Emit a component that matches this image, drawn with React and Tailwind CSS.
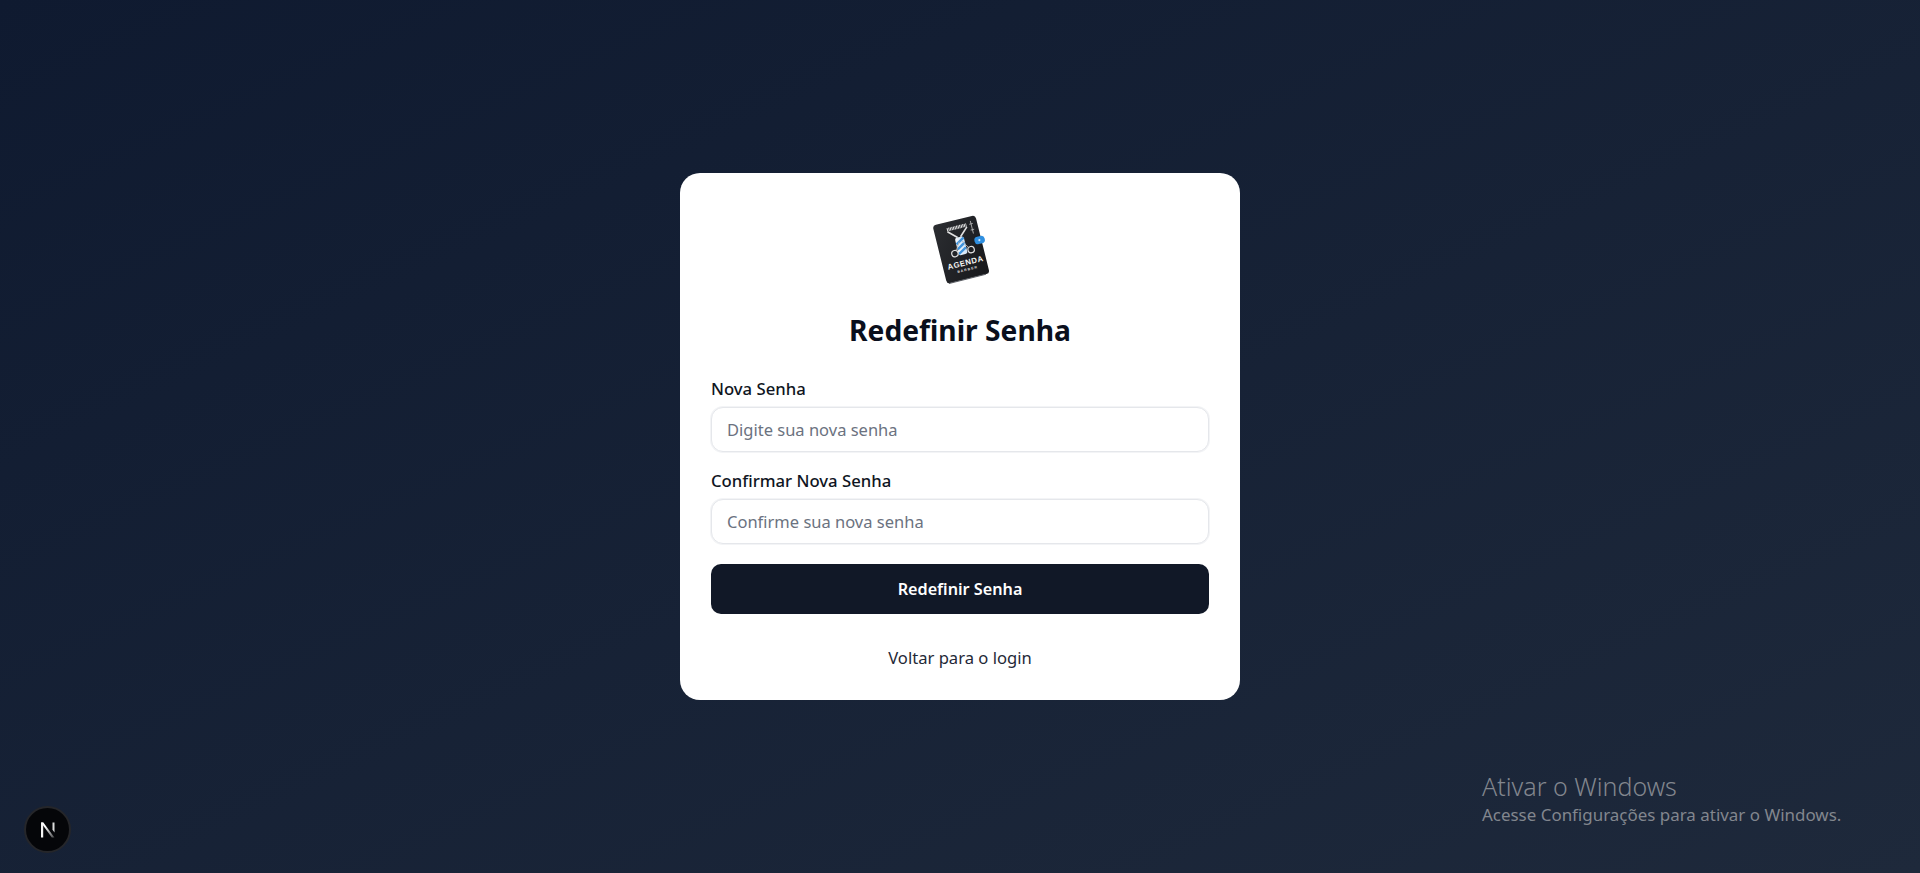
import React from "react";

const sans = "font-['Noto_Sans','Open_Sans',sans-serif]";

function Logo() {
  return (
    <svg width="72" height="72" viewBox="0 0 72 72" className="block">
      <defs>
        <linearGradient id="cover" x1="0" y1="0" x2="1" y2="1">
          <stop offset="0" stopColor="#2b2d31" />
          <stop offset="1" stopColor="#17181b" />
        </linearGradient>
        <linearGradient id="pole" x1="0" y1="0" x2="1" y2="0">
          <stop offset="0" stopColor="#f2f7fc" />
          <stop offset="1" stopColor="#cfe3f5" />
        </linearGradient>
      </defs>
      <g transform="rotate(-14 37 36)">
        <rect x="15" y="6.5" width="44" height="60" rx="3.5" fill="url(#cover)" />
        <path d="M17 66.5h38" stroke="#5b5e64" strokeWidth="1" />
        <path d="M28 14h20" stroke="#e6e6e6" strokeWidth="3.4" strokeDasharray="1 0.6" />
        <path d="M28 16l8.5 8M48 16l-8.5 8" stroke="#e2e2e2" strokeWidth="1.6" fill="none" />
        <rect x="33.5" y="24" width="9" height="18" rx="2.5" fill="url(#pole)" />
        <path d="M33.8 30.5l8.4-5M33.8 35.5l8.4-5M33.8 40.5l8.4-5" stroke="#3f93dc" strokeWidth="2.4" />
        <circle cx="30" cy="39" r="3.2" fill="none" stroke="#e0e0e0" strokeWidth="1.2" />
        <circle cx="46.7" cy="39" r="3.2" fill="none" stroke="#e0e0e0" strokeWidth="1.2" />
        <path d="M32 36.5l5-8M44.8 36.5l-5-8M52.8 11v13M51 14h3.6M51 20h3.6" stroke="#b8b8b8" strokeWidth="0.8" fill="none" />
        <text x="38" y="53" textAnchor="middle" fontSize="7.8" fontWeight="700" fill="#f4f4f4" fontFamily="'Liberation Sans', sans-serif" letterSpacing="0.5">AGENDA</text>
        <text x="38.5" y="58.5" textAnchor="middle" fontSize="3.4" fontWeight="700" fill="#e6e6e6" fontFamily="'Liberation Sans', sans-serif" letterSpacing="1.1">BARBER</text>
        <rect x="52" y="28" width="10.5" height="7.5" rx="3.5" fill="#2f8fe0" />
        <circle cx="57" cy="31.8" r="1.1" fill="#cfe6fa" />
      </g>
    </svg>
  );
}

const inputClass =
  "block w-full h-[45px] px-[15px] text-[16.5px] text-gray-900 placeholder:text-[#6b7280] border border-[#e5e7eb] shadow-[0_0_0_1px_#f3f4f6] rounded-[12px] bg-white outline-none";

export default function App() {
  return (
    <div className={`relative min-h-screen flex items-center justify-center overflow-hidden bg-gradient-to-br from-[#0f1a30] to-[#1e293b] ${sans}`}>
      <main className="w-[560px] bg-white rounded-[20px] px-[31px] pt-[37px] pb-[26px]">
        <div className="flex justify-center mb-[22px] h-[78px] items-center">
          <Logo />
        </div>
        <h1 className="text-[28.2px] leading-[40px] font-bold text-center text-[#0a0f1c] mb-[27px]">Redefinir Senha</h1>
        <form>
          <div className="mb-[17px]">
            <label className="block text-[16.7px] leading-[24px] font-medium text-[#0f1522] mb-[6px]">Nova Senha</label>
            <input type="password" placeholder="Digite sua nova senha" className={inputClass} />
          </div>
          <div className="mb-[20px]">
            <label className="block text-[16.7px] leading-[24px] font-medium text-[#0f1522] mb-[6px]">Confirmar Nova Senha</label>
            <input type="password" placeholder="Confirme sua nova senha" className={inputClass} />
          </div>
          <button type="button" className="block w-full h-[50px] pt-[1px] rounded-[10px] bg-[#111827] text-white text-[16.2px] font-semibold">
            Redefinir Senha
          </button>
        </form>
        <div className="mt-[28px] text-center">
          <a className="text-[16.6px] leading-[32px] text-[#1f2937]">Voltar para o login</a>
        </div>
      </main>

      <div className="absolute left-[24px] top-[806px] w-[47px] h-[47px] rounded-full bg-[#050609] border-2 border-[#25262a] flex items-center justify-center">
        <svg width="20" height="20" viewBox="0 0 20 20">
          <defs>
            <linearGradient id="ng" x1="0" y1="0" x2="1" y2="1">
              <stop offset="0.3" stopColor="#fff" />
              <stop offset="1" stopColor="#fff" stopOpacity="0.25" />
            </linearGradient>
          </defs>
          <path d="M3 2.5h2.2v15H3z" fill="#f5f5f5" />
          <path d="M3 2.5h2.4l11 15h-2.6z" fill="url(#ng)" />
          <path d="M14.5 2.5h2v10l-2-2.8z" fill="#dcdcdc" />
        </svg>
      </div>

      <div className="absolute left-[1482px] top-[770px] text-[#82868e] pointer-events-none">
        <div className="text-[25px] leading-[32px] font-light">Ativar o Windows</div>
        <div className="text-[16.95px] leading-[26px]">Acesse Configurações para ativar o Windows.</div>
      </div>
    </div>
  );
}
